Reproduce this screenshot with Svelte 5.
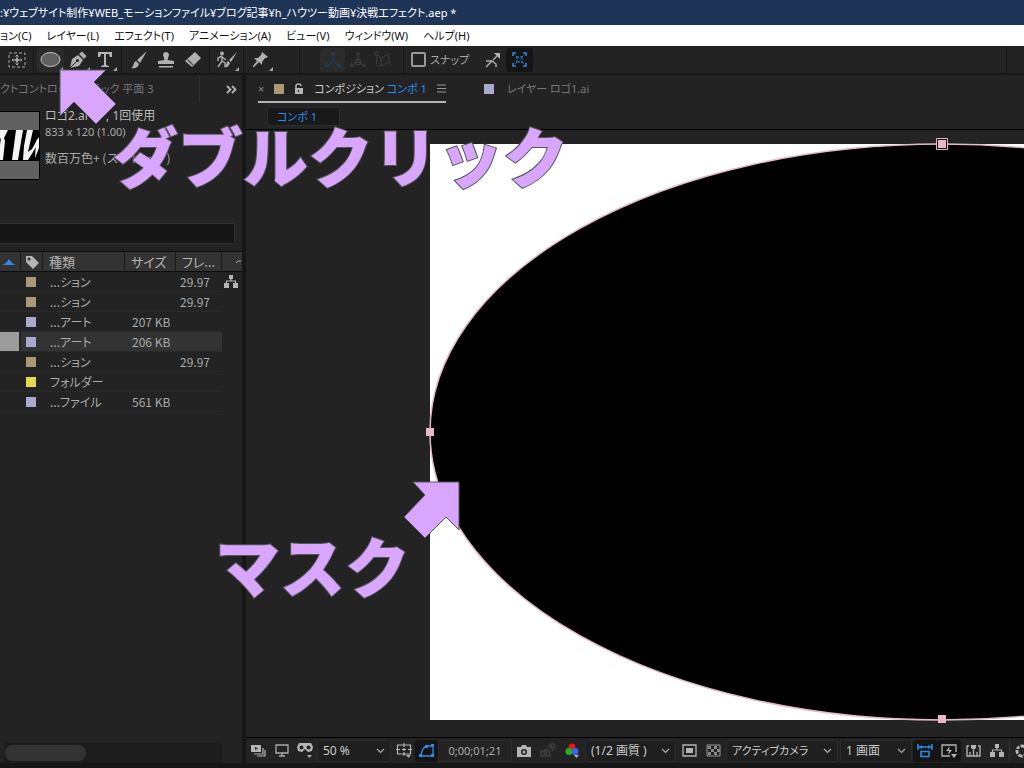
<script lang="ts">
	type Item = { color: string; kind: string; size: string; rate: string; selected?: boolean };

	const menus = [
		'ョン(C)',
		'レイヤー(L)',
		'エフェクト(T)',
		'アニメーション(A)',
		'ビュー(V)',
		'ウィンドウ(W)',
		'ヘルプ(H)'
	];

	const items: Item[] = [
		{ color: 'sand', kind: '...ション', size: '', rate: '29.97' },
		{ color: 'sand', kind: '...ション', size: '', rate: '29.97' },
		{ color: 'lavender', kind: '...アート', size: '207 KB', rate: '' },
		{ color: 'lavender', kind: '...アート', size: '206 KB', rate: '', selected: true },
		{ color: 'sand', kind: '...ション', size: '', rate: '29.97' },
		{ color: 'yellow', kind: 'フォルダー', size: '', rate: '' },
		{ color: 'lavender', kind: '...ファイル', size: '561 KB', rate: '' }
	];

	let search = $state('');
	let snap = $state(false);
	let tool = $state('ellipse');
</script>

{#snippet corner()}
	<svg class="corner" width="4" height="4" viewBox="0 0 4 4"><path d="M4 0v4H0z" fill="#aaa" /></svg>
{/snippet}

{#snippet dropdown(label: string, value: string, size: string)}
	<label class="dropdown {size}">
		<select aria-label={label}><option>{value}</option></select>
		<svg width="9" height="6" viewBox="0 0 9 6"><path d="M1 1l3.5 3.5L8 1" fill="none" stroke="#aaa" stroke-width="1.2" /></svg>
	</label>
{/snippet}

{#snippet tree()}
	<svg width="14" height="13" viewBox="0 0 14 13" fill="#b4b4b4">
		<path d="M5 0h4v4H5zM0 8h5v5H0zM9 8h5v5H9z" />
		<path d="M7 4v2M2.500 8V6h9v2" fill="none" stroke="#b4b4b4" stroke-width="1.2" />
	</svg>
{/snippet}

<div class="app">
	<header class="title">:¥ウェブサイト制作¥WEB_モーションファイル¥ブログ記事¥h_ハウツー動画¥決戦エフェクト.aep *</header>

	<nav class="menus">
		{#each menus as menu}
			<button>{menu}</button>
		{/each}
	</nav>

	<div class="toolbar">
		<div class="group">
			<button class="tool" aria-label="アンカーポイント">
				<svg width="18" height="16" viewBox="0 0 18 16" fill="none" stroke="#aaa">
					<rect x="1" y="1" width="16" height="14" stroke-dasharray="3 2" />
					<circle cx="9" cy="8" r="1.500" fill="#aaa" />
					<path d="M9 3v3M9 10v3M4 8h3M11 8h3M7.500 4.500L9 3l1.500 1.500M7.500 11.500L9 13l1.500-1.500M5.500 6.500L4 8l1.500 1.500M12.500 6.500L14 8l-1.500 1.500" />
				</svg>
			</button>
		</div>
		<div class="group">
			<button class="tool" class:active={tool === 'ellipse'} aria-label="楕円形" onclick={() => (tool = 'ellipse')}>
				<svg width="21" height="17" viewBox="0 0 21 17"><ellipse cx="10.500" cy="8.500" rx="9.500" ry="7" fill="#606060" stroke="#c4c4c4" /></svg>
				{@render corner()}
			</button>
			<button class="tool" aria-label="ペン" onclick={() => (tool = 'pen')}>
				<svg width="18" height="18" viewBox="0 0 18 18">
					<path d="M1 17L3 8l6-4 5 5-4 6z" fill="#b0b0b0" /><path d="M10 3l3-2.500L17.500 5 15 8z" fill="#b0b0b0" />
					<path d="M1 17l7-7" stroke="#232323" /><circle cx="8.500" cy="9.500" r="1.500" fill="#232323" />
				</svg>
				{@render corner()}
			</button>
			<button class="tool" aria-label="文字" onclick={() => (tool = 'text')}>
				<svg width="16" height="16" viewBox="0 0 16 16"><path d="M1 0h14v5h-2l-1-3H9v11l3 1v1H4v-1l3-1V2H4L3 5H1z" fill="#b4b4b4" /></svg>
				{@render corner()}
			</button>
		</div>
		<div class="group">
			<button class="tool" aria-label="ブラシ">
				<svg width="18" height="18" viewBox="0 0 18 18" fill="#b0b0b0"><path d="M17 0L7 9l3 3z" /><path d="M6 10l3 3c-1 4-5 5-8 4 3-1 2-6 5-7z" /></svg>
			</button>
			<button class="tool" aria-label="スタンプ">
				<svg width="18" height="18" viewBox="0 0 18 18" fill="#b0b0b0"><path d="M7.500 9L6 4c0-4 6-4 6 0l-1.500 5 6.500 1v3H1v-3z" /><path d="M2 15h14v1.500H2z" /></svg>
			</button>
			<button class="tool" aria-label="消しゴム">
				<svg width="18" height="18" viewBox="0 0 18 18"><path d="M11 1l6 6-9 9-7-6z" fill="#b0b0b0" /><path d="M3.500 8.500L9 14" stroke="#4a4a4a" stroke-width="1.200" /></svg>
			</button>
		</div>
		<div class="group">
			<button class="tool" aria-label="ロトブラシ">
				<svg width="22" height="18" viewBox="0 0 22 18">
					<circle cx="6" cy="2.500" r="2" fill="#aaa" />
					<path d="M6 5l-4 2v3M6 5v5l-4 6M6 10l3 2v4M6 6l4 3" fill="none" stroke="#aaa" stroke-width="1.500" />
					<path d="M21 1l-8 8 2 2zM12 10l2 2c-1 3-3 5-6 4 3-1 2-5 4-6z" fill="#b0b0b0" />
				</svg>
				{@render corner()}
			</button>
		</div>
		<div class="group pins">
			<button class="tool" aria-label="パペットピン">
				<svg width="17" height="17" viewBox="0 0 17 17" fill="#b0b0b0"><path d="M10 1l6 5-2 1h-1l-3 4v3l-3-3-5 5H1v-1l4-5-3-3h4l3-3z" /></svg>
				{@render corner()}
			</button>
		</div>
		<div class="group axes">
			<button class="tool boxed" aria-label="ローカル軸">
				<svg width="18" height="18" viewBox="0 0 18 18" fill="none" stroke="#1d4467"><path d="M9 11V2M9 11l-7 4M9 11l7 4M7 4l2-3 2 3M5 15H1l2-3M13 15h4l-2-3" /></svg>
			</button>
			<button class="tool" aria-label="ワールド軸">
				<svg width="18" height="18" viewBox="0 0 18 18" fill="none" stroke="#404040"><path d="M9 11V2M9 11l-7 4M9 11l7 4M7 4l2-3 2 3M5 15H1l2-3M13 15h4l-2-3" /><circle cx="9" cy="11" r="3" /></svg>
			</button>
			<button class="tool" aria-label="ビュー軸">
				<svg width="18" height="18" viewBox="0 0 18 18" fill="none" stroke="#404040"><path d="M3 3l4 4 8-4v8l-8 4V7M3 3v8l-1 3M1 5V1h4M7 15H3M15 11l2 3" /></svg>
			</button>
		</div>
		<div class="group snap">
			<label><input type="checkbox" bind:checked={snap} />スナップ</label>
			<button class="tool" aria-label="エッジ">
				<svg width="16" height="16" viewBox="0 0 16 16"><path d="M1 15l6-6 4 3v3M1 9h6M8 8l5-5" fill="none" stroke="#aaa" stroke-width="1.500" /><path d="M9 1h6v6z" fill="#b4b4b4" /></svg>
			</button>
			<button class="tool dark" aria-label="境界">
				<svg width="15" height="15" viewBox="0 0 15 15" fill="none" stroke="#2d8ceb"><path d="M1 4V1h3M11 1h3v3M14 11v3h-3M4 14H1v-3" stroke-width="1.500" /><path d="M3.500 3.500l2 2M11.500 3.500l-2 2M3.500 11.500l2-2M11.500 11.500l-2-2" /><rect x="5" y="5" width="5" height="5" stroke-dasharray="2 1" /></svg>
			</button>
		</div>
	</div>

	<main>
		<section class="project">
			<div class="tabs">
				<span class="tab">クトコントロール ブラック 平面 3</span>
				<button class="more" aria-label="他のパネル">
					<svg width="11" height="9" viewBox="0 0 11 9"><path d="M1 1l3.500 3.500L1 8M6 1l3.500 3.500L6 8" fill="none" stroke="#b4b4b4" stroke-width="1.800" /></svg>
				</button>
			</div>
			<div class="info">
				<svg class="thumb" width="40" height="69" viewBox="0 0 40 69">
					<path d="M0 0h40v69H0z" fill="#000" />
					<path d="M0 1h39v67H0z" fill="#616161" />
					<path d="M0 19h39v31H0z" fill="#000" />
					<path d="M0 19h8L4 27l1 3-2 19H0V34l1-7-1 1zM16 19h7l-5 30h-6zM27 19h6l-5 22 4-3 5-9 2 1-6 11-5 8h-5l1-14zM36 30l3-4v11l-4 10z" fill="#f4f4f4" />
				</svg>
				<div class="meta">
					<p class="name">ロゴ2.ai ▼ , 1回使用</p>
					<p>833 x 120 (1.00)</p>
					<p class="depth">数百万色+ (ストレート)</p>
				</div>
			</div>
			<input class="search" type="text" aria-label="検索" bind:value={search} />
			<table>
				<colgroup><col class="c-sort" /><col class="c-tag" /><col class="c-kind" /><col class="c-size" /><col class="c-rate" /><col /></colgroup>
				<thead>
					<tr>
						<th aria-label="名前"><svg width="14" height="6" viewBox="0 0 14 6"><path d="M0 6q4-1 7-6 3 5 7 6z" fill="#2d8ceb" /></svg></th>
						<th aria-label="ラベル"><svg width="14" height="14" viewBox="0 0 14 14"><path d="M1 1h6l7 7-6 6-7-7z" fill="#b4b4b4" /><circle cx="4" cy="4" r="1.500" fill="#333" /></svg></th>
						<th>種類</th>
						<th>サイズ</th>
						<th>フレ...</th>
						<th class="last" aria-label="フロー"><svg width="5" height="4" viewBox="0 0 5 4"><path d="M0 3l2-2h3" fill="none" stroke="#aaa" /></svg></th>
					</tr>
				</thead>
				<tbody>
					{#each items as item, i}
						<tr class:selected={item.selected}>
							<td></td>
							<td><i class="swatch {item.color}"></i></td>
							<td>{item.kind}</td>
							<td>{item.size}</td>
							<td class="rate">{item.rate}</td>
							<td class="flow">{#if i === 0}{@render tree()}{/if}</td>
						</tr>
					{/each}
				</tbody>
			</table>
			<div class="scroll"><div class="bar"></div></div>
		</section>

		<section class="comp">
			<div class="tabs">
				<div class="tab current">
					<button class="close" aria-label="閉じる">×</button>
					<i class="swatch sand"></i>
					<svg width="10" height="12" viewBox="0 0 10 12"><path d="M1 5h8v6H1z" fill="#b4b4b4" /><path d="M2 6V3q0-2 2.500-2T7 3" fill="none" stroke="#b4b4b4" stroke-width="1.500" /><path d="M4.500 7v2" stroke="#222" /></svg>
					<span>コンポジション <b>コンポ 1</b></span>
					<button class="close" aria-label="パネルメニュー"><svg width="9" height="9" viewBox="0 0 9 9"><path d="M0 1h9M0 4.500h9M0 8h9" stroke="#999" /></svg></button>
				</div>
				<div class="tab"><i class="swatch lavender"></i><span>レイヤー ロゴ1.ai</span></div>
			</div>
			<div class="crumbs"><button>コンポ 1</button></div>
			<div class="viewer">
				<svg class="canvas" width="1024" height="576" viewBox="0 0 1024 576">
					<path d="M0 0h1024v576H0z" fill="#fff" />
					<ellipse cx="512" cy="288" rx="512" ry="288" fill="#000" stroke="#e4b8c9" stroke-width="1.500" />
					<path d="M506.500-5.500h11v11h-11z" fill="#111" stroke="#e4b8c9" />
					<path d="M508-4h8v8h-8zM-4 284h8v8h-8zM508 571h8v8h-8z" fill="#e4b8c9" />
				</svg>
			</div>
			<footer>
				<button aria-label="常にプレビュー">
					<svg width="15" height="13" viewBox="0 0 15 13"><path d="M0 1h10v7H0z" fill="#b4b4b4" /><path d="M4 3l3 1.500L4 6z" fill="#222" /><path d="M12 4v6H3M14 6v6H6" fill="none" stroke="#b4b4b4" stroke-width="1.200" /></svg>
				</button>
				<button aria-label="プライマリビューア">
					<svg width="14" height="13" viewBox="0 0 14 13"><path d="M1 1h12v8H1zM7 9v3M4 12h6" fill="none" stroke="#aaa" stroke-width="1.300" /></svg>
				</button>
				<button aria-label="VR">
					<svg width="16" height="15" viewBox="0 0 16 15"><path d="M2 0h12l2 4-1 4-4 1-3-3-3 3-4-1-1-4z" fill="#b4b4b4" /><circle cx="4.500" cy="4.500" r="2" fill="#222" /><circle cx="11.500" cy="4.500" r="2" fill="#222" /><path d="M10 12h5l-2.500 3z" fill="#aaa" /></svg>
				</button>
				{@render dropdown('拡大率', '50 %', 'zoom')}
				<button aria-label="グリッド">
					<svg width="16" height="15" viewBox="0 0 16 15"><path d="M1.500 2h13v9h-13zM8 0v4M8 9v4M0 6.500h4M12 6.500h4M6 6.500h4M8 5v3" fill="none" stroke="#b4b4b4" stroke-width="1.200" /><path d="M10 12h5l-2.500 3z" fill="#aaa" /></svg>
				</button>
				<button class="dark" aria-label="マスクの表示">
					<svg width="16" height="14" viewBox="0 0 16 14"><path d="M2 12Q3 3 8 2h6v10z" fill="none" stroke="#2d8ceb" stroke-width="1.300" /><path d="M0 10h3v3H0zM6 1h3v3H6zM12 0h3v3h-3zM12 10h3v3h-3z" fill="#2d8ceb" /></svg>
				</button>
				<button class="time">0;00;01;21</button>
				<button aria-label="スナップショット">
					<svg width="16" height="12" viewBox="0 0 16 12"><path d="M1 2h4l1-2h4l1 2h4v10H1z" fill="#b4b4b4" /><circle cx="8" cy="7" r="3" fill="#222" /><circle cx="8" cy="7" r="1.500" fill="#b4b4b4" /></svg>
				</button>
				<button aria-label="スナップショットを表示">
					<svg width="16" height="15" viewBox="0 0 16 15" fill="none" stroke="#404040" stroke-width="1.500"><path d="M1 8h3l1-1h4l1 6H1z" /><circle cx="5.500" cy="10" r="1.500" /><path d="M8 4l3-3q4-1 4 3l-3 4" /><circle cx="11.500" cy="4" r="1" /></svg>
				</button>
				<button aria-label="チャンネル">
					<svg width="15" height="15" viewBox="0 0 15 15"><circle cx="7" cy="4" r="3.500" fill="#f01414" /><circle cx="4" cy="8.500" r="3.500" fill="#1fb51f" /><circle cx="10" cy="8.500" r="3.500" fill="#3c64e6" /><path d="M9 12h5l-2.500 3z" fill="#b4b4b4" /></svg>
				</button>
				{@render dropdown('解像度', '(1/2 画質 )', 'quality')}
				<button aria-label="目標範囲">
					<svg width="15" height="13" viewBox="0 0 15 13"><path d="M1 1h13v11H1z" fill="none" stroke="#b4b4b4" stroke-width="1.300" /><path d="M4 4h7v5H4z" fill="#b4b4b4" /></svg>
				</button>
				<button aria-label="透明グリッド">
					<svg width="15" height="13" viewBox="0 0 15 13"><path d="M1 1h13v11H1z" fill="none" stroke="#999" /><path d="M2 2h3v3H2zM8 2h3v3H8zM5 5h3v3H5zM11 5h3v3h-3zM2 8h3v3H2zM8 8h3v3H8z" fill="#888" /></svg>
				</button>
				{@render dropdown('3D ビュー', 'アクティブカメラ', 'camera')}
				{@render dropdown('画面数', '1 画面', 'screens')}
				<button class="dark" aria-label="ピクセル縦横比">
					<svg width="16" height="14" viewBox="0 0 16 14"><path d="M1 0v6M15 0v6M1 3h14" stroke="#2d8ceb" stroke-width="1.500" /><path d="M2 3l3-2v4zM14 3l-3-2v4z" fill="#2d8ceb" /><path d="M4 7.500h8v5H4z" fill="none" stroke="#2d8ceb" stroke-width="1.500" /></svg>
				</button>
				<button class="dark" aria-label="高速プレビュー">
					<svg width="16" height="14" viewBox="0 0 16 14"><path d="M9 12H1V1h14v7" fill="none" stroke="#b4b4b4" stroke-width="1.300" /><path d="M9 2L5 7h3l-1 4 4-5H8zM10 10h6l-3 4z" fill="#b4b4b4" /></svg>
				</button>
				<button aria-label="タイムライン">
					<svg width="15" height="12" viewBox="0 0 15 12"><path d="M3 1H1v10h13V1h-2M4 11V7M7.500 11V5M11 11V7" fill="none" stroke="#b4b4b4" stroke-width="1.300" /><path d="M5 0h5v3L7.500 5 5 3z" fill="#b4b4b4" /></svg>
				</button>
				<button aria-label="フローチャート">{@render tree()}</button>
				<button class="exposure" aria-label="露出">
					<svg width="14" height="14" viewBox="0 0 14 14" fill="none" stroke="#b4b4b4"><circle cx="7" cy="7" r="5" stroke-width="3" /><path d="M4 0l2 5M12 1L8 6M14 8H8M9 14L7 9M1 12l5-4M0 5l5 1" stroke="#222" stroke-width="1.200" /></svg>
				</button>
			</footer>
		</section>
	</main>

	<!-- callouts over the editor -->
	<svg class="arrow to-tool" width="58" height="58" viewBox="0 0 58 58"><path d="M1 1h46L35 13l22 22-20 20-22-22L1 47z" fill="#d8a5ff" stroke="#555" /></svg>
	<p class="callout click">ダブルクリック</p>
	<svg class="arrow to-mask" width="58" height="58" viewBox="0 0 58 58"><path d="M10 1h46v48L43 36 22 57 1 36l21-22z" fill="#d8a5ff" stroke="#555" /></svg>
	<p class="callout mask">マスク</p>
</div>

<style>
	:global(body) {
		margin: 0;
		background: #161616;
	}
	.app {
		position: relative;
		height: 100vh;
		display: flex;
		flex-direction: column;
		overflow: hidden;
		background: #161616;
		color: #aaa;
		font-family: 'Noto Sans', 'Noto Sans CJK JP', sans-serif;
		font-size: 11px;
		line-height: 16px;
		font-feature-settings: 'palt';
	}
	button,
	input,
	select {
		font: inherit;
		font-feature-settings: inherit;
		color: inherit;
		background: none;
		border: none;
		padding: 0;
		margin: 0;
	}
	p {
		margin: 0;
	}
	svg {
		display: block;
		flex: none;
	}
	.title {
		height: 25px;
		flex: none;
		line-height: 25px;
		background: #1f3557;
		color: #fff;
		white-space: nowrap;
	}
	.menus {
		height: 21px;
		flex: none;
		display: flex;
		gap: 15px;
		background: #fff;
		color: #111;
	}

	.toolbar {
		height: 27px;
		flex: none;
		display: flex;
		margin-bottom: 2px;
		background: #232323;
	}
	.group {
		display: flex;
		align-items: center;
		padding: 0 3px;
		border-right: 1px solid #171717;
	}
	.tool {
		position: relative;
		width: 27px;
		height: 24px;
		display: flex;
		align-items: center;
		justify-content: center;
	}
	.tool.active,
	.tool.boxed {
		background: #2b2b2b;
		border-radius: 3px;
	}
	.dark {
		background: #151515;
		border-radius: 3px;
	}
	.corner {
		position: absolute;
		right: 1px;
		bottom: 1px;
	}
	.pins {
		padding-right: 25px;
	}
	.axes {
		padding: 0 8px 0 20px;
	}
	.axes .tool {
		width: 25px;
	}
	.snap {
		flex: 1;
		padding-left: 7px;
		margin-right: 17px;
	}
	.snap label {
		display: flex;
		align-items: center;
		gap: 4px;
		margin-right: 10px;
	}
	.snap input {
		appearance: none;
		width: 15px;
		height: 15px;
		border: 2px solid #999;
		border-radius: 2px;
	}

	main {
		flex: 1;
		min-height: 0;
		display: grid;
		grid-template-columns: 242px minmax(0, 1fr);
		gap: 4px;
		padding-bottom: 5px;
	}
	.project,
	.comp {
		display: flex;
		flex-direction: column;
		min-width: 0;
		min-height: 0;
		background: #232323;
	}
	.tabs {
		height: 28px;
		flex: none;
		display: flex;
		color: #777;
		white-space: nowrap;
	}
	.project .tab {
		width: 199px;
		line-height: 28px;
		border-right: 1px solid #303030;
	}
	.more {
		flex: 1;
		display: flex;
		align-items: center;
		justify-content: flex-end;
		padding-right: 5px;
	}
	.info {
		display: flex;
		gap: 5px;
		padding-top: 5px;
		height: 115px;
		box-sizing: border-box;
		white-space: nowrap;
	}
	.thumb {
		margin-top: 3px;
	}
	.info .name {
		font-size: 12px;
		color: #bbb;
	}
	.info .depth {
		margin-top: 10px;
		font-family: 'Noto Sans CJK JP', sans-serif;
		font-size: 12px;
		font-feature-settings: normal;
	}
	.search {
		height: 21px;
		box-sizing: border-box;
		margin: 5px 7px 7px 0;
		background: #161616;
		border: 1px solid #303030;
		border-left: none;
		border-radius: 0 2px 2px 0;
	}
	table {
		width: 100%;
		table-layout: fixed;
		border-collapse: collapse;
		white-space: nowrap;
		font-family: 'Noto Sans CJK JP', sans-serif;
		font-size: 12px;
		border-top: 1px solid #0c0c0c;
	}
	.c-sort {
		width: 21px;
	}
	.c-tag {
		width: 22px;
	}
	.c-kind {
		width: 82px;
	}
	.c-size {
		width: 51px;
	}
	.c-rate {
		width: 46px;
	}
	th {
		height: 19px;
		padding: 0 0 0 6px;
		background: #333;
		border-bottom: 1px solid #0c0c0c;
		font-size: 13px;
		font-weight: normal;
		text-align: left;
		color: #b4b4b4;
		box-shadow: inset -1px 0 #1a1a1a;
	}
	th:first-child {
		padding-left: 2px;
	}
	th:nth-child(2) {
		padding-left: 4px;
	}
	th.last {
		padding-left: 14px;
		box-shadow: none;
	}
	td {
		height: 20px;
		box-sizing: border-box;
		padding: 0 0 0 7px;
		border-bottom: 1px solid #2a2a2a;
	}
	td:nth-child(2) {
		padding-left: 5px;
	}
	.rate {
		padding: 0 12px 0 0;
		text-align: right;
	}
	.flow {
		padding-left: 2px;
		border: none;
	}
	.selected td:not(.flow) {
		background: #333;
	}
	.selected td:first-child {
		background: #9c9c9c;
		background-clip: content-box;
		padding: 0 2px 0 0;
	}
	.swatch {
		display: block;
		flex: none;
		width: 10px;
		height: 10px;
	}
	.sand {
		background: #ab9876;
	}
	.lavender {
		background: #a9a9cf;
	}
	.yellow {
		background: #e6d84a;
	}
	.scroll {
		height: 20px;
		flex: none;
		box-sizing: border-box;
		margin: auto 20px 0 4px;
		padding: 2px 1px;
		background: #1d1d1d;
	}
	.bar {
		width: 81px;
		height: 16px;
		border-radius: 8px;
		background: #333;
	}

	.comp .tabs {
		padding-left: 12px;
		gap: 38px;
	}
	.comp .tab {
		display: flex;
		align-items: center;
		gap: 13px;
		height: 25px;
		padding-top: 1px;
	}
	.comp .current {
		gap: 10px;
		color: #ccc;
		border-bottom: 2px solid #b4b4b4;
	}
	.current b,
	.crumbs button {
		font-weight: normal;
		color: #2d8ceb;
	}
	.close {
		color: #888;
	}
	.crumbs {
		height: 27px;
		flex: none;
		box-sizing: border-box;
		padding: 4px 21px;
		border-bottom: 1px solid #000;
	}
	.crumbs button {
		display: block;
		width: 73px;
		height: 19px;
		line-height: 17px;
		padding-left: 9px;
		text-align: left;
		background: #191919;
		border: 1px solid #2c2c2c;
		border-radius: 2px;
		box-sizing: border-box;
	}
	.viewer {
		flex: 1;
		min-height: 0;
		overflow: hidden;
		padding: 14px 0 0 184px;
	}
	.canvas {
		overflow: visible;
	}
	footer {
		height: 26px;
		flex: none;
		display: flex;
		align-items: center;
		box-sizing: border-box;
		padding-left: 1px;
		border-top: 1px solid #000;
		overflow: hidden;
		white-space: nowrap;
	}
	footer > button {
		width: 23px;
		height: 22px;
		flex: none;
		display: flex;
		align-items: center;
		justify-content: center;
	}
	footer .time {
		width: 74px;
		border: 1px solid #2c2c2c;
		box-sizing: border-box;
	}
	.time ~ button {
		width: 24px;
	}
	.exposure {
		border-left: 1px solid #333;
	}
	.dropdown {
		display: grid;
		flex: none;
		align-items: center;
		height: 22px;
		box-sizing: border-box;
		margin: 0 1px;
		border: 1px solid #2c2c2c;
		border-radius: 2px;
		background: #1f1f1f;
		color: #ccc;
		font-size: 12px;
	}
	.dropdown select,
	.dropdown svg {
		grid-area: 1 / 1;
	}
	.dropdown select {
		appearance: none;
		width: 100%;
		padding-left: 5px;
	}
	.dropdown svg {
		justify-self: end;
		margin-right: 5px;
		pointer-events: none;
	}
	.zoom {
		width: 74px;
	}
	.quality {
		width: 91px;
	}
	.camera {
		width: 112px;
		font-size: 11px;
	}
	.screens {
		width: 72px;
	}

	.arrow,
	.callout {
		position: absolute;
		pointer-events: none;
	}
	.callout {
		font-family: 'Noto Sans CJK JP', sans-serif;
		font-size: 65px;
		line-height: 65px;
		font-weight: 900;
		font-feature-settings: normal;
		color: #d8a5ff;
		white-space: nowrap;
		-webkit-text-stroke: 2px #555;
		paint-order: stroke fill;
	}
	.to-tool {
		left: 59px;
		top: 69px;
	}
	.click {
		left: 113px;
		top: 122px;
	}
	.to-mask {
		left: 403px;
		top: 481px;
	}
	.mask {
		left: 215px;
		top: 532px;
	}
</style>
